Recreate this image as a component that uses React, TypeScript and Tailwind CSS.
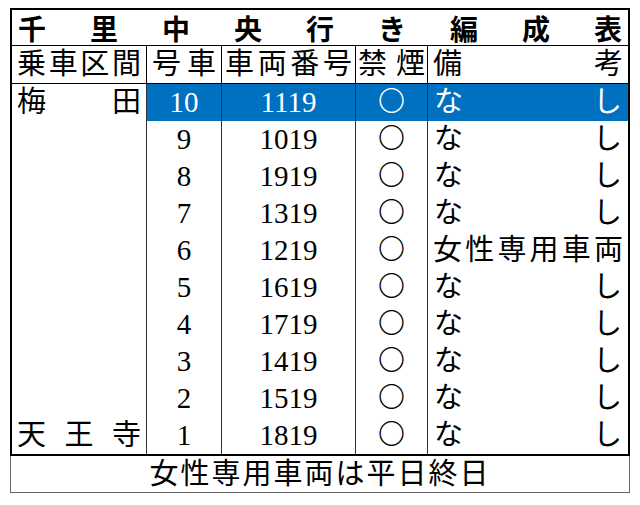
import React from 'react';

const rows = [
  { no: '10', car: '1119', note: null, selected: true },
  { no: '9', car: '1019', note: null },
  { no: '8', car: '1919', note: null },
  { no: '7', car: '1319', note: null },
  { no: '6', car: '1219', note: '女性専用車両' },
  { no: '5', car: '1619', note: null },
  { no: '4', car: '1719', note: null },
  { no: '3', car: '1419', note: null },
  { no: '2', car: '1519', note: null },
  { no: '1', car: '1819', note: null },
];

// spreads each character across the cell, like Excel "distributed" alignment
const Spread = ({ text, className = '' }: { text: string; className?: string }) => (
  <div className={`flex items-center justify-between ${className}`}>
    {text.split('').map((c, i) => (
      <span key={i}>{c}</span>
    ))}
  </div>
);

export default function App() {
  return (
    <div className="w-[640px] h-[505px] bg-white pt-[8px] pl-[10px] text-black font-['Liberation_Serif','Noto_Sans_CJK_JP',serif]">
      <div className="w-[620px] border-2 border-black">
        {/* title */}
        <Spread
          text="千里中央行き編成表"
          className="h-[36px] px-[6px] border-b border-black text-[28px] font-bold font-['Noto_Sans_CJK_JP',sans-serif] leading-none"
        />

        <div className="grid grid-cols-[134px_75px_134px_72px_201px] grid-rows-[38px_repeat(10,37px)] text-[29px] leading-none">
          {/* header */}
          <Spread text="乗車区間" className="px-[5px] border-b border-black" />
          <Spread text="号車" className="px-[5px] border-b border-l border-black" />
          <Spread text="車両番号" className="px-[3px] border-b border-l border-black" />
          <Spread text="禁煙" className="px-[2px] border-b border-l border-black" />
          <Spread text="備考" className="px-[5px] border-b border-l border-black" />

          {/* section column, merged */}
          <div className="row-span-10 flex flex-col justify-between">
            <Spread text="梅田" className="h-[37px] px-[5px]" />
            <Spread text="天王寺" className="h-[37px] px-[5px]" />
          </div>

          {rows.map((r) => {
            const sel = r.selected ? 'bg-[#0070c0] text-white' : '';
            return (
              <React.Fragment key={r.no}>
                <div className={`flex items-center justify-center border-l border-[#333] ${sel}`}>{r.no}</div>
                <div className={`flex items-center justify-center border-l border-[#333] ${sel}`}>{r.car}</div>
                <div className={`flex items-center justify-center border-l border-[#333] text-[27px] font-light ${sel}`}>〇</div>
                {r.note ? (
                  <Spread text={r.note} className={`px-[5px] border-l border-[#333] ${sel}`} />
                ) : (
                  <Spread text="なし" className={`px-[6px] border-l border-[#333] ${sel}`} />
                )}
              </React.Fragment>
            );
          })}
        </div>
      </div>

      {/* footer note */}
      <div className="w-[620px] h-[37px] border border-t-0 border-[#666] flex items-center justify-center text-[29px] leading-none tracking-[2px]">
        女性専用車両は平日終日
      </div>
    </div>
  );
}
